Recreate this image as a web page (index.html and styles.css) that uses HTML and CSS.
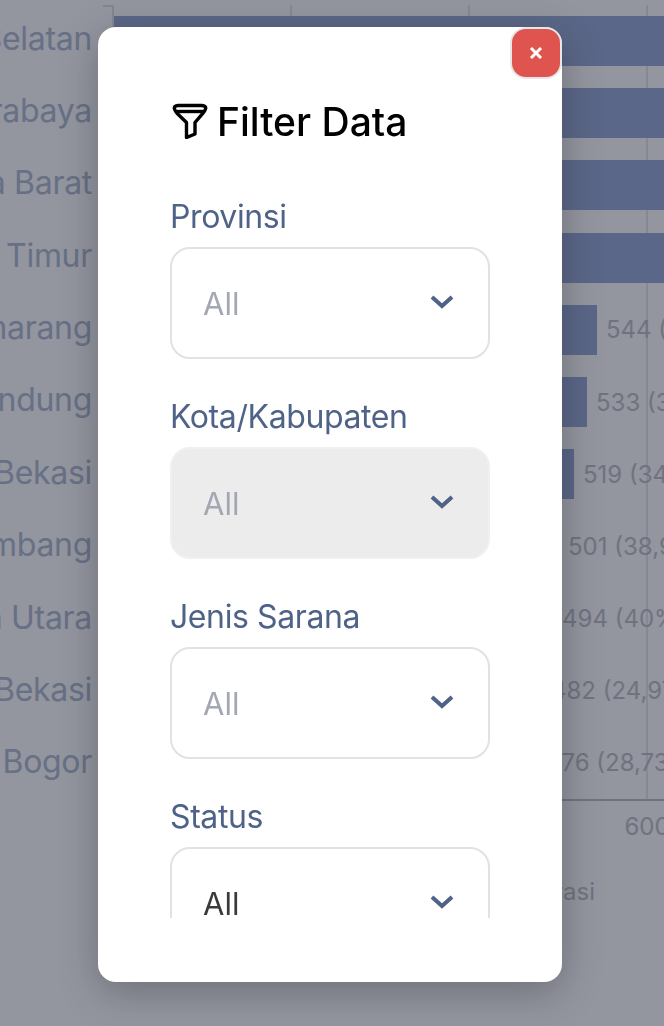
FILE: index.html
```html
<!DOCTYPE html>
<html lang="en">
<head>
<meta charset="UTF-8" />
<meta name="viewport" content="width=device-width, initial-scale=1" />
<title>Filter Data</title>
<link rel="stylesheet" href="styles.css">
</head>
<body>

  <div class="chart">
    <div class="chart-body">
      <div class="chart-labels">
        <span>Jakarta Selatan</span>
        <span>Kota Surabaya</span>
        <span>Jakarta Barat</span>
        <span>Jakarta Timur</span>
        <span>Kota Semarang</span>
        <span>Kota Bandung</span>
        <span>Kota Bekasi</span>
        <span>Kota Palembang</span>
        <span>Jakarta Utara</span>
        <span>Kab. Bekasi</span>
        <span>Kab. Bogor</span>
      </div>
      <div class="plot">
        <div class="plot-row"><div class="bar" style="width:700px"></div></div>
        <div class="plot-row"><div class="bar" style="width:680px"></div></div>
        <div class="plot-row"><div class="bar" style="width:660px"></div></div>
        <div class="plot-row"><div class="bar" style="width:640px"></div></div>
        <div class="plot-row"><div class="bar" style="width:483px"></div><span class="value">544 (35,2%)</span></div>
        <div class="plot-row"><div class="bar" style="width:473px"></div><span class="value">533 (31,4%)</span></div>
        <div class="plot-row"><div class="bar" style="width:460px"></div><span class="value">519 (34,6%)</span></div>
        <div class="plot-row"><div class="bar" style="width:445px"></div><span class="value">501 (38,9%)</span></div>
        <div class="plot-row"><div class="bar" style="width:439px"></div><span class="value">494 (40%)</span></div>
        <div class="plot-row"><div class="bar" style="width:428px"></div><span class="value">482 (24,97%)</span></div>
        <div class="plot-row"><div class="bar" style="width:423px"></div><span class="value">476 (28,73%)</span></div>
      </div>
    </div>
    <div class="axis-ticks">
      <span>0</span>
      <span>200</span>
      <span>400</span>
      <span>600</span>
    </div>
    <div class="axis-title">Jumlah Registrasi</div>
  </div>

  <div class="overlay">
    <div class="modal">
      <button class="close-btn" type="button" aria-label="Close">
        <svg width="14" height="14" viewBox="0 0 14 14" fill="none" stroke="#fff" stroke-width="3">
          <path d="M2 2l10 10M12 2L2 12" />
        </svg>
      </button>

      <h2 class="modal-title">
        <svg class="funnel" width="36" height="36" viewBox="0 0 36 36" fill="none" stroke="#000" stroke-width="3.4" stroke-linejoin="round">
          <path d="M6 2.500h24c2.800 0 4.200 1.500 3.500 3.500-.5 1.500-1.500 3-2.500 4.200L23 19.500V31l-8.500 3.500V19.500L5 10.200C4 9 3 7.500 2.500 6 1.800 4 3.200 2.500 6 2.500z" />
          <path d="M4.500 8.500h27" />
        </svg>
        Filter Data
      </h2>

      <div class="filters">
        <div class="field">
          <label>Provinsi</label>
          <div class="select placeholder">
            <span>All</span>
            <svg class="chevron" width="24" height="14" viewBox="0 0 24 14" fill="none" stroke="#4f6388" stroke-width="4"><path d="M2 2l10 9 10-9" /></svg>
          </div>
        </div>
        <div class="field">
          <label>Kota/Kabupaten</label>
          <div class="select placeholder disabled">
            <span>All</span>
            <svg class="chevron" width="24" height="14" viewBox="0 0 24 14" fill="none" stroke="#4f6388" stroke-width="4"><path d="M2 2l10 9 10-9" /></svg>
          </div>
        </div>
        <div class="field">
          <label>Jenis Sarana</label>
          <div class="select placeholder">
            <span>All</span>
            <svg class="chevron" width="24" height="14" viewBox="0 0 24 14" fill="none" stroke="#4f6388" stroke-width="4"><path d="M2 2l10 9 10-9" /></svg>
          </div>
        </div>
        <div class="field">
          <label>Status</label>
          <div class="select">
            <span>All</span>
            <svg class="chevron" width="24" height="14" viewBox="0 0 24 14" fill="none" stroke="#4f6388" stroke-width="4"><path d="M2 2l10 9 10-9" /></svg>
          </div>
        </div>
      </div>
    </div>
  </div>

</body>
</html>
```

FILE: styles.css
```css
* {
  box-sizing: border-box;
}
html,
body {
  height: 100%;
}
body {
  margin: 0;
  overflow: hidden;
  background: #fff;
  font-family: Inter, "Noto Sans", sans-serif;
}

/* chart behind the modal */
.chart {
  padding-top: 5px;
}
.chart-body {
  display: flex;
}
.chart-labels {
  width: 113px;
  flex-shrink: 0;
  margin: -3px 0 3px;
  padding-right: 21px;
  display: flex;
  flex-direction: column;
  align-items: flex-end;
  font-size: 32px;
  letter-spacing: -0.3px;
  color: #abb9ce;
}
.chart-labels span {
  flex: 1;
  display: flex;
  align-items: center;
  white-space: nowrap;
}
.plot {
  position: relative;
  flex: 1;
  height: 796px;
  border-left: 2px solid #dfe2e8;
  border-bottom: 2px solid #b9bec9;
  background-image: linear-gradient(to right, transparent 176px, #e6e8ec 176px);
  background-size: 178px 100%;
  display: flex;
  flex-direction: column;
  margin-left: -1px;
}
.plot::before {
  content: "";
  position: absolute;
  top: 0;
  left: -11px;
  width: 10px;
  height: 2px;
  background: #dfe2e8;
}
.plot-row {
  flex: 1;
  display: flex;
  align-items: center;
  gap: 9px;
  white-space: nowrap;
}
.bar {
  height: 50px;
  flex-shrink: 0;
  background: #94a7d3;
}
.value {
  font-size: 24px;
  color: #bcbec1;
}
.axis-ticks {
  display: flex;
  margin-left: 24px;
  padding-top: 11px;
  font-size: 24px;
  color: #bcbec1;
}
.axis-ticks span {
  width: 178px;
  flex-shrink: 0;
  text-align: center;
}
.axis-title {
  width: 595px;
  margin-top: 36px;
  text-align: right;
  font-size: 24px;
  color: #bcbec1;
}

/* modal */
.overlay {
  position: fixed;
  top: 0;
  left: 0;
  right: 0;
  bottom: 0;
  background: rgba(29, 33, 54, 0.48);
  padding: 27px 0 44px 98px;
}
.modal {
  position: relative;
  width: 464px;
  height: 955px;
  padding: 72px 72px 64px;
  background: #fff;
  border-radius: 18px;
  box-shadow: 0 10px 40px rgba(0, 0, 0, 0.25);
  display: flex;
  flex-direction: column;
}
.close-btn {
  position: absolute;
  top: 0;
  right: 0;
  width: 52px;
  height: 52px;
  padding: 0;
  display: flex;
  align-items: center;
  justify-content: center;
  background: #e0544f;
  border: 2px solid #e5e7eb;
  border-radius: 16px;
}
.modal-title {
  margin: 0;
  height: 44px;
  display: flex;
  align-items: center;
  gap: 10px;
  font-size: 39px;
  font-weight: 500;
  color: #000;
}
.funnel {
  flex-shrink: 0;
  margin-left: 2px;
  margin-right: -1px;
}
.filters {
  flex: 1;
  min-height: 0;
  margin-top: 54px;
  overflow: hidden;
  display: flex;
  flex-direction: column;
  gap: 38px;
}
.field {
  flex-shrink: 0;
}
.field label {
  display: block;
  height: 40px;
  margin-bottom: 10px;
  font-size: 32px;
  line-height: 40px;
  letter-spacing: -0.4px;
  color: #4f6388;
}
.select {
  height: 112px;
  padding: 0 34px 0 31px;
  display: flex;
  align-items: center;
  justify-content: space-between;
  background: #fff;
  border: 2px solid #e2e2e2;
  border-radius: 20px;
  font-size: 31px;
  color: #3a3a3a;
}
.placeholder {
  color: #a3a7b3;
}
.disabled {
  background: #ececec;
  border-color: #f0f0f0;
}
.chevron {
  margin-top: -3px;
}
```
